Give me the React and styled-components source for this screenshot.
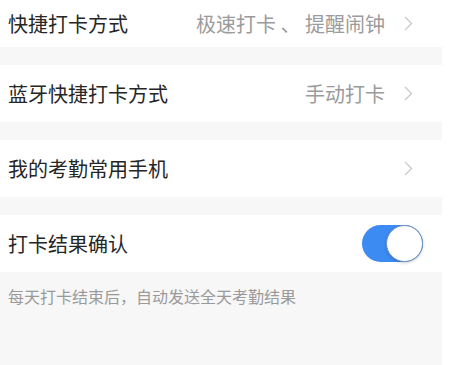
import React, { useState } from "react";
import styled, { createGlobalStyle } from "styled-components";

const GlobalStyle = createGlobalStyle`
  html, body {
    margin: 0;
    padding: 0;
    background: #fff;
  }
  body {
    font-family: "Noto Sans CJK SC", "Noto Sans", sans-serif;
  }
`;

const Page = styled.div`
  width: 442px;
  height: 365px;
  background: #f7f7f7;
  display: flex;
  flex-direction: column;
  gap: 18px;
  overflow: hidden;
`;

const Row = styled.div`
  height: ${(p) => p.height || 57}px;
  flex-shrink: 0;
  background: #fff;
  display: flex;
  align-items: center;
  padding: 0 29px 0 8px;
`;

const Label = styled.div`
  flex: 1;
  font-size: 20px;
  color: #262626;
  white-space: nowrap;
`;

const Value = styled.div`
  font-size: 20px;
  color: #9b9b9b;
  white-space: pre;
  margin-right: 19px;
`;

const Chevron = styled.svg`
  width: 9px;
  height: 15px;
  flex-shrink: 0;
`;

const Toggle = styled.button`
  width: 61px;
  height: 37px;
  margin-right: -10px;
  border: none;
  padding: 0;
  border-radius: 19px;
  background: ${(p) => (p.on ? "#3b8bf2" : "#e5e5e5")};
  position: relative;
  cursor: pointer;
`;

const Knob = styled.span`
  position: absolute;
  top: 0;
  left: ${(p) => (p.on ? "24px" : "0")};
  width: 37px;
  height: 37px;
  box-sizing: border-box;
  border-radius: 50%;
  background: #fff;
  border: 1.5px solid #6a8fbf;
  box-shadow: 0 1px 3px rgba(0, 0, 0, 0.2);
`;

const Note = styled.div`
  font-size: 16px;
  color: #9a9a9a;
  padding: 0 8px;
  margin-top: -6px;
`;

function Arrow() {
  return (
    <Chevron viewBox="0 0 9 15">
      <path d="M1 1 L7.5 7.5 L1 14" fill="none" stroke="#c8c8c8" strokeWidth="1.3" />
    </Chevron>
  );
}

export default function App() {
  const [on, setOn] = useState(true);
  return (
    <>
      <GlobalStyle />
      <Page>
        <Row height={47}>
          <Label>快捷打卡方式</Label>
          <Value>极速打卡 、 提醒闹钟</Value>
          <Arrow />
        </Row>
        <Row>
          <Label>蓝牙快捷打卡方式</Label>
          <Value>手动打卡</Value>
          <Arrow />
        </Row>
        <Row>
          <Label>我的考勤常用手机</Label>
          <Arrow />
        </Row>
        <Row>
          <Label>打卡结果确认</Label>
          <Toggle on={on} onClick={() => setOn(!on)}>
            <Knob on={on} />
          </Toggle>
        </Row>
        <Note>每天打卡结束后，自动发送全天考勤结果</Note>
      </Page>
    </>
  );
}
